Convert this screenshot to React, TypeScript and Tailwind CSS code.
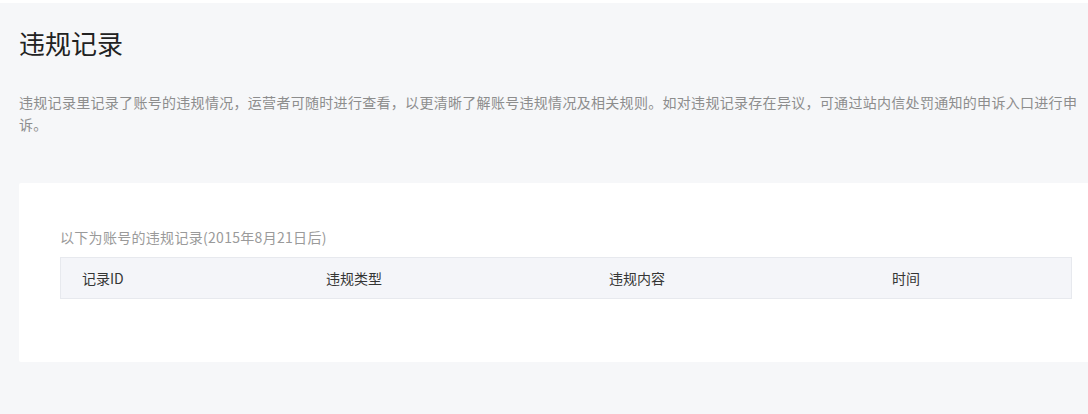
const columns = [
  { label: "记录ID", width: "w-[244px]" },
  { label: "违规类型", width: "w-[283px]" },
  { label: "违规内容", width: "w-[283px]" },
  { label: "时间", width: "flex-1" },
];

const App = () => {
  return (
    <div
      className="w-[1088px] h-[414px] overflow-hidden bg-[#f6f7f9] border-t-[3px] border-white"
      style={{ fontFamily: '"Noto Sans CJK SC", "Noto Sans", sans-serif' }}
    >
      <div className="pl-[19px]">
        <h1 className="pt-[22px] text-[26px] leading-[36px] text-[#222]">违规记录</h1>
        <p className="mt-[30px] w-[1066px] text-[14px] tracking-[0.3px] leading-[22px] text-[#8d8d8d]">
          违规记录里记录了账号的违规情况，运营者可随时进行查看，以更清晰了解账号违规情况及相关规则。如对违规记录存在异议，可通过站内信处罚通知的申诉入口进行申诉。
        </p>

        {/* records card */}
        <div className="mt-[48px] w-[1094px] h-[179px] bg-white rounded-[2px] px-[41px] pt-[44px]">
          <div className="text-[14px] tracking-[0.3px] leading-[20px] text-[#9a9a9a]">
            以下为账号的违规记录(2015年8月21日后)
          </div>
          <div className="mt-[10px] w-[1012px] h-[42px] flex items-center bg-[#f4f5f9] border border-[#e7e9ee] text-[14px] text-[#353535]">
            {columns.map((col) => (
              <div key={col.label} className={`${col.width} pl-[21px]`}>
                {col.label}
              </div>
            ))}
          </div>
        </div>
      </div>
    </div>
  );
};

export default App;
